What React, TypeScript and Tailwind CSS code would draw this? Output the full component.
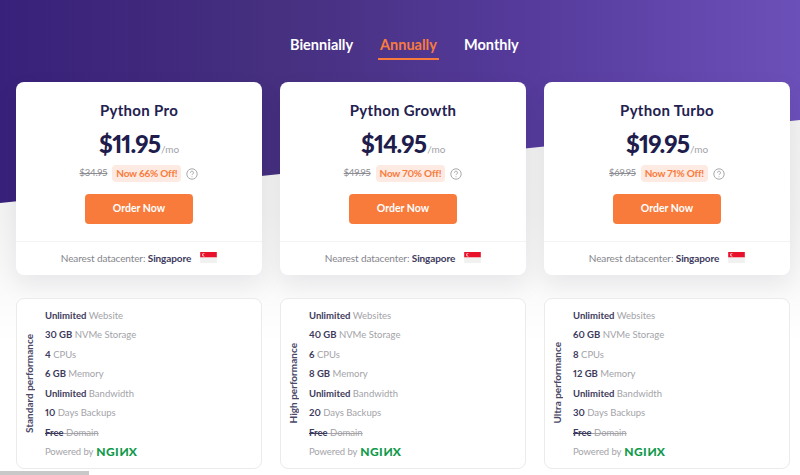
const plans = [
  { name: "Python Pro", price: "$11.95", old: "$34.95", off: "Now 66% Off!", perf: "Standard performance", site: "Website", ssd: "30 GB", cpu: "4", mem: "6 GB", days: "10" },
  { name: "Python Growth", price: "$14.95", old: "$49.95", off: "Now 70% Off!", perf: "High performance", site: "Websites", ssd: "40 GB", cpu: "6", mem: "8 GB", days: "20" },
  { name: "Python Turbo", price: "$19.95", old: "$69.95", off: "Now 71% Off!", perf: "Ultra performance", site: "Websites", ssd: "60 GB", cpu: "8", mem: "12 GB", days: "30" },
];

function Flag() {
  return (
    <svg width="17" height="12" viewBox="0 0 18 13" className="ml-[9px] -mt-[2px]">
      <rect width="18" height="6" fill="#e8102a" />
      <rect y="6" width="18" height="6" fill="#f1f1f1" />
      <circle cx="4" cy="3" r="1.8" fill="#fff" />
      <circle cx="4.8" cy="3" r="1.6" fill="#e8102a" />
    </svg>
  );
}

function Help() {
  return (
    <svg width="12" height="12" viewBox="0 0 12 12" fill="none" stroke="#a9a9ad" className="ml-[5px]">
      <circle cx="6" cy="6" r="5.2" strokeWidth="1" />
      <path d="M4.5 4.7a1.5 1.5 0 1 1 2.2 1.3c-.5.3-.7.6-.7 1.1" strokeWidth="1" />
      <path d="M6 8.4v.8" strokeWidth="1" />
    </svg>
  );
}

function Row({ b, t, strike }: { b: string; t: string; strike?: boolean }) {
  return (
    <div className="h-[19.5px] leading-[19.5px] whitespace-nowrap">
      <span className={`font-bold text-[#3d3a5c] ${strike ? "line-through" : ""}`}>{b}</span>
      <span className={`text-[#a3a3a8] ${strike ? "line-through" : ""}`}> {t}</span>
    </div>
  );
}

export default function App() {
  return (
    <div className="relative isolate h-[475px] w-[800px] overflow-hidden bg-[linear-gradient(180deg,#f1f1f1_0%,#f3f3f3_45%,#ffffff_72%)] font-['Lato','Liberation_Sans',sans-serif] proportional-nums">
      <div className="absolute inset-x-0 top-0 -z-10 h-[203px] bg-[linear-gradient(90deg,#38217a_0%,#46307f_35%,#553a9b_65%,#6c50b9_100%)] [clip-path:polygon(0_0,100%_0,100%_120px,0_203px)]" />

      <nav className="flex justify-center gap-[27px] pt-[36px] pl-[7px] text-[14.5px] font-bold leading-[18px] text-white">
        <div className="w-[63px] whitespace-nowrap">Biennially</div>
        <div className="relative w-[57px] whitespace-nowrap text-[#f97b3c]">
          Annually
          <div className="absolute -left-[2px] top-[22px] h-[2px] w-[61px] bg-[#f97b3c]" />
        </div>
        <div className="w-[53px] whitespace-nowrap">Monthly</div>
      </nav>

      <div className="mt-[28px] grid w-[774px] ml-[16px] grid-cols-3 gap-x-[18px] gap-y-[23px]">
        {plans.map((p) => (
          <div key={p.name} className="flex h-[193px] flex-col rounded-lg bg-white shadow-[0_10px_24px_rgba(30,20,70,0.08)]">
            <div className="flex flex-1 flex-col items-center pt-[18px]">
              <div className="text-[15px] font-bold leading-[20px] tracking-[0.3px] text-[#232150]">{p.name}</div>
              <div className="mt-[9px] flex items-end">
                <span className="text-[24px] font-black leading-[30px] tracking-[-0.9px] text-[#201c4c]">{p.price}</span>
                <span className="mb-[3px] ml-[1px] text-[10px] leading-[14px] text-[#a3a3a8]">/mo</span>
              </div>
              <div className="mt-[6px] flex items-center">
                <span className="text-[9.5px] tracking-[-0.2px] text-[#8b8b92] line-through">{p.old}</span>
                <span className="ml-[5px] rounded-sm bg-[#fdeae2] px-[4px] py-[1px] text-[10px] font-bold leading-[15px] tracking-[-0.2px] text-[#f97b3c]">{p.off}</span>
                <Help />
              </div>
              <button className="mt-[12px] h-[30px] w-[108px] rounded bg-[#f97b3c] text-[10.5px] font-bold text-white">Order Now</button>
            </div>
            <div className="flex h-[34px] items-center justify-center border-t border-[#f3f3f5] text-[10px] tracking-[-0.1px] text-[#85858c]">
              <span>Nearest datacenter:&nbsp;</span>
              <span className="font-bold text-[#3d3a5c]">Singapore</span>
              <Flag />
            </div>
          </div>
        ))}

        {plans.map((p) => (
          <div key={p.perf} className="flex h-[171px] rounded-lg border border-[#ebebed] bg-white pl-[5px] pt-[6.5px] text-[9.5px]">
            <div className="flex w-[14px] shrink-0 items-center justify-center pb-[7.5px]">
              <span className="rotate-180 whitespace-nowrap text-[10px] font-bold text-[#4a4868] [writing-mode:vertical-rl]">{p.perf}</span>
            </div>
            <div className="ml-[9px]">
              <Row b="Unlimited" t={p.site} />
              <Row b={p.ssd} t="NVMe Storage" />
              <Row b={p.cpu} t="CPUs" />
              <Row b={p.mem} t="Memory" />
              <Row b="Unlimited" t="Bandwidth" />
              <Row b={p.days} t="Days Backups" />
              <Row b="Free" t="Domain" strike />
              <div className="flex h-[19.5px] items-center whitespace-nowrap tracking-[-0.1px] text-[#a3a3a8]">
                Powered by
                <span className="ml-[3px] text-[12px] font-black tracking-[0.4px] text-[#0f9a4a]">
                  NGI<span className="inline-block -scale-x-100">N</span>X
                </span>
              </div>
            </div>
          </div>
        ))}
      </div>

      <div className="absolute bottom-0 left-0 h-[4px] w-[89px] bg-[#c8c8c8]" />
    </div>
  );
}
